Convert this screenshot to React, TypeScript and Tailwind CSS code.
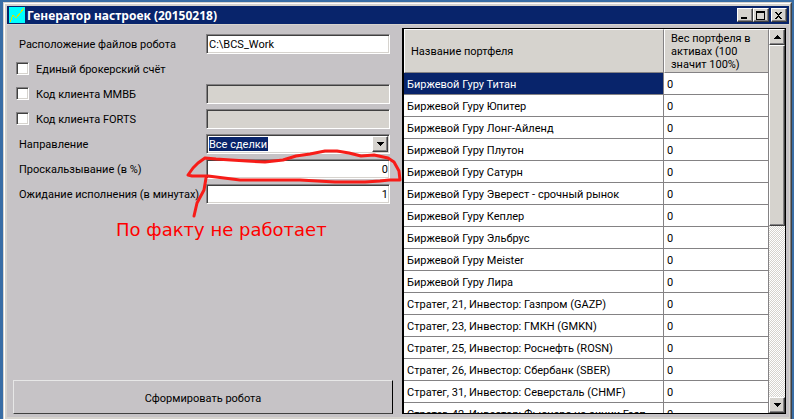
import { useState } from 'react'
import type { ReactNode } from 'react'

const portfolios = [
  'Биржевой Гуру Титан',
  'Биржевой Гуру Юпитер',
  'Биржевой Гуру Лонг-Айленд',
  'Биржевой Гуру Плутон',
  'Биржевой Гуру Сатурн',
  'Биржевой Гуру Эверест - срочный рынок',
  'Биржевой Гуру Кеплер',
  'Биржевой Гуру Эльбрус',
  'Биржевой Гуру Meister',
  'Биржевой Гуру Лира',
  'Стратег, 21, Инвестор: Газпром (GAZP)',
  'Стратег, 23, Инвестор: ГМКН (GMKN)',
  'Стратег, 25, Инвестор: Роснефть (ROSN)',
  'Стратег, 26, Инвестор: Сбербанк (SBER)',
  'Стратег, 31, Инвестор: Северсталь (CHMF)',
  'Стратег, 42, Инвестор: Фьючерс на акции Газп',
]

const raised =
  'border border-t-white border-l-white border-r-[#404040] border-b-[#404040] bg-[#d6d3ce] shadow-[inset_-1px_-1px_0_#848284] flex items-center justify-center'
const sunken =
  'h-5 w-full min-w-0 border border-t-[#848284] border-l-[#848284] border-r-white border-b-white shadow-[inset_1px_1px_0_#404040,inset_-1px_-1px_0_#d6d3ce] px-px outline-none'
const headCell =
  'border-t border-r border-b border-l border-t-white border-r-[#848284] border-b-[#848284] border-l-white pl-[6px] font-normal'

function CaptionButton({ label, children }: { label: string; children: ReactNode }) {
  return (
    <button aria-label={label} className={`${raised} h-[14px] w-4`}>
      <svg width="10" height="9" viewBox="0 0 10 9" shapeRendering="crispEdges">
        {children}
      </svg>
    </button>
  )
}

function Arrow({ up = false }: { up?: boolean }) {
  return (
    <svg width="7" height="4" viewBox="0 0 7 4" shapeRendering="crispEdges">
      <path d={up ? 'M3 0h1v1h1v1h1v1h1v1H0V3h1V2h1V1h1z' : 'M0 0h7v1H6v1H5v1H4v1H3V3H2V2H1V1H0z'} />
    </svg>
  )
}

function Row({ id, label, children }: { id: string; label: string; children: ReactNode }) {
  return (
    <div className="grid grid-cols-[187px_1fr] items-center">
      <label htmlFor={id} className="whitespace-nowrap">
        {label}
      </label>
      {children}
    </div>
  )
}

function CheckRow({ id, label, children }: { id: string; label: string; children?: ReactNode }) {
  return (
    <div className="grid h-5 grid-cols-[187px_1fr] items-center">
      <div className="-ml-[3px] flex items-center gap-[7px]">
        <input
          id={id}
          type="checkbox"
          className="mb-[2px] size-[13px] appearance-none border border-t-[#848284] border-l-[#848284] border-r-white border-b-white bg-white shadow-[inset_1px_1px_0_#404040,inset_-1px_-1px_0_#d6d3ce] checked:bg-[#08246b]"
        />
        <label htmlFor={id}>{label}</label>
      </div>
      {children}
    </div>
  )
}

export default function App() {
  const [selected, setSelected] = useState(0)

  return (
    <div className="relative flex h-screen flex-col overflow-hidden bg-[#396da5] pt-[2px] pr-[2px] pl-[3px] font-[Roboto,sans-serif] text-[11px] leading-[13px] text-black">
      <div className="flex min-h-0 flex-1 flex-col border-t border-r border-l border-t-[#d6d3ce] border-r-[#404040] border-l-[#d6d3ce] bg-[#d6d3ce]">
        <div className="flex min-h-0 flex-1 flex-col border-t border-r border-l border-t-white border-r-[#848284] border-l-white pt-[2px] pr-px pb-[2px] pl-[2px]">
          <header className="mb-px flex h-[18px] shrink-0 items-center bg-[#08246b] pr-[2px] pl-[2px] text-white">
            <svg width="16" height="16" viewBox="0 0 16 16" shapeRendering="crispEdges">
              <path fill="#00ffff" d="M0 0h16v16H0z" />
              <path fill="none" stroke="#dee300" d="M1 15l3-7 3 3 5-6 3-4" />
            </svg>
            <h1 className="ml-[2px] flex-1 font-['Noto_Sans',sans-serif] text-[12px] font-bold">
              Генератор настроек (20150218)
            </h1>
            <CaptionButton label="Свернуть">
              <path d="M1 6h6v2H1z" />
            </CaptionButton>
            <CaptionButton label="Развернуть">
              <path d="M0 0h9v9H0zM1 2v6h7V2z" fillRule="evenodd" />
            </CaptionButton>
            <div className="w-[2px]" />
            <CaptionButton label="Закрыть">
              <path d="M1 1h2v1h1v1h1V2h1V1h2v1H7v1H6v1H5v1h1v1h1v1h1v1H6V7H5V6H4v1H3v1H1V7h1V6h1V5h1V4H3V3H2V2H1z" />
            </CaptionButton>
          </header>

          <main className="grid min-h-0 flex-1 grid-cols-[395fr_387fr] bg-[#c6c3c6]">
            <form
              className="flex min-h-0 flex-col pt-[9px] pr-[12px] pb-[3px] pl-[12px]"
              onSubmit={(e) => e.preventDefault()}
            >
              <div className="flex flex-col gap-[5px]">
                <Row id="path" label="Расположение файлов робота">
                  <input id="path" defaultValue="C:\BCS_Work" className={`${sunken} bg-white pl-[2px]`} />
                </Row>
                <CheckRow id="single" label="Единый брокерский счёт" />
                <CheckRow id="mmvb" label="Код клиента ММВБ">
                  <input aria-label="Код клиента ММВБ" disabled className={`${sunken} bg-[#d6d3ce]`} />
                </CheckRow>
                <CheckRow id="forts" label="Код клиента FORTS">
                  <input aria-label="Код клиента FORTS" disabled className={`${sunken} bg-[#d6d3ce]`} />
                </CheckRow>
                <Row id="direction" label="Направление">
                  <div className={`${sunken} flex items-center justify-between bg-white`}>
                    <select
                      id="direction"
                      className="ml-px h-[14px] appearance-none bg-[#08246b] text-white outline-none"
                    >
                      <option>Все сделки</option>
                    </select>
                    <button type="button" aria-label="Открыть список" className={`${raised} h-4 w-4`}>
                      <Arrow />
                    </button>
                  </div>
                </Row>
                <Row id="slippage" label="Проскальзывание (в %)">
                  <input id="slippage" defaultValue="0" className={`${sunken} bg-white text-right`} />
                </Row>
                <Row id="timeout" label="Ожидание исполнения (в минутах)">
                  <input id="timeout" defaultValue="1" className={`${sunken} bg-white text-right`} />
                </Row>
              </div>
              <button className="-mr-[3px] -ml-[6px] mt-auto h-[34px] border border-t-[#e7e7e7] border-r-black border-b-[#404040] border-l-[#e7e7e7] pt-[2px]">
                Сформировать робота
              </button>
            </form>

            {/* Portfolio weights */}
            <section className="mt-[3px] mr-[3px] mb-[3px] flex min-h-0 min-w-0 overflow-hidden border border-l-2 border-black bg-white">
              <div className="min-w-0 flex-1 overflow-hidden">
                <table className="w-full table-fixed border-separate border-spacing-0">
                  <thead>
                    <tr className="h-[44px] bg-[#d6d3ce] text-left">
                      <th className={headCell}>Название портфеля</th>
                      <th className={`${headCell} w-[105px]`}>Вес портфеля в активах (100 значит 100%)</th>
                    </tr>
                  </thead>
                  <tbody>
                    {portfolios.map((name, i) => (
                      <tr key={name} className="h-[22px]" onClick={() => setSelected(i)}>
                        <td
                          className={`overflow-hidden border-r border-b border-[#848284] pt-[2px] pl-[3px] whitespace-nowrap ${
                            i === selected ? 'bg-[#08246b] text-white' : 'bg-white'
                          }`}
                        >
                          {name}
                        </td>
                        <td className="border-r border-b border-[#848284] bg-white pt-[2px] pl-[3px]">0</td>
                      </tr>
                    ))}
                  </tbody>
                </table>
              </div>
              <div className="flex w-4 shrink-0 flex-col bg-[conic-gradient(#d6d3ce_25%,#fff_0_50%,#d6d3ce_0_75%,#fff_0)] bg-[size:2px_2px]">
                <button aria-label="Вверх" className={`${raised} h-4 shrink-0`}>
                  <Arrow up />
                </button>
                <div className={`${raised} h-[181px] shrink-0`} />
                <button aria-label="Вниз" className={`${raised} mt-auto h-4 shrink-0`}>
                  <Arrow />
                </button>
              </div>
            </section>
          </main>
        </div>
      </div>

      {/* Red marker note drawn over the form */}
      <svg
        className="pointer-events-none absolute top-[145px] left-[180px]"
        width="230"
        height="75"
        viewBox="180 145 230 75"
        fill="none"
        stroke="#f71c18"
        strokeWidth="3"
        strokeLinecap="round"
        strokeLinejoin="round"
      >
        <path d="M205 158L216 159L231 160L247 161L265 162L283 160L296 156L310 154L325 151L337 151L349 153L361 156L374 155L388 158L394 162L399 171L400 180L389 180L380 181L365 182L335 182L300 180L265 180L240 180L224 178L208 176L192 176L188 175L193 168L198 163L205 158" />
        <path d="M206 178L204 190L197 203L194 216" />
      </svg>
      <p className="pointer-events-none absolute top-[219px] left-[116px] font-['DejaVu_Sans',sans-serif] text-[18px] leading-[22px] whitespace-nowrap text-[#ff0000]">
        По факту не работает
      </p>
    </div>
  )
}
